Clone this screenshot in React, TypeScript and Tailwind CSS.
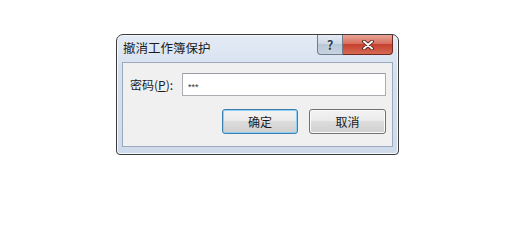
import React from "react";

const font = { fontFamily: '"Noto Sans CJK SC", "Noto Sans", sans-serif' };

const CaptionButtons = () => (
    <div className="flex h-[20px] mr-[5px]">
        <div className="w-[26px] h-full flex items-center justify-center rounded-bl-[4px] border border-t-0 border-[#6f7c8c] bg-[linear-gradient(#e4ebf3,#cdd8e5_45%,#b9c6d6_50%,#c9d4e1)]">
            <span className="text-[13px] font-bold leading-none text-[#2d3f57] [text-shadow:0_0_2px_#fff]">?</span>
        </div>
        <div className="w-[50px] h-full flex items-center justify-center rounded-br-[4px] border border-l-0 border-t-0 border-[#6e2a22] bg-[linear-gradient(#e9a597,#d8705f_45%,#c7402f_50%,#d46a52)]">
            <svg width="12" height="10" viewBox="0 0 12 10">
                <path d="M2 1.5 L10 8.5 M10 1.5 L2 8.5" stroke="#3b1612" strokeWidth="3.6" strokeLinecap="round" />
                <path d="M2 1.5 L10 8.5 M10 1.5 L2 8.5" stroke="#ffffff" strokeWidth="2" strokeLinecap="round" />
            </svg>
        </div>
    </div>
);

const DialogButton = ({ label, focused }: { label: string; focused?: boolean }) => (
    <div
        className={
            focused
                ? "w-[76px] h-[25px] flex items-center justify-center rounded-[3px] border border-[#3c7fb1] shadow-[inset_0_0_0_1px_#8fd0f2] bg-[linear-gradient(#f3f3f3,#ebebeb_45%,#dddddd_50%,#cfcfcf)]"
                : "w-[77px] h-[25px] flex items-center justify-center rounded-[3px] border border-[#707070] shadow-[inset_0_0_0_1px_#fbfbfb] bg-[linear-gradient(#f2f2f2,#ebebeb_45%,#dddddd_50%,#cfcfcf)]"
        }
    >
        <span className="text-[12px] leading-none text-[#1a1a1a]">{label}</span>
    </div>
);

export default function App() {
    return (
        <div className="w-[526px] h-[200px] bg-white pt-[34px] pl-[116px]" style={font}>
            <div className="w-[283px] h-[121px] flex flex-col rounded-t-[7px] rounded-b-[4px] border border-[#3c3c3c] bg-[linear-gradient(#e3ebf5,#d6e1ee_30%,#cfdbea)] shadow-[inset_0_0_0_1px_#f4f8fc]">
                <div className="h-[27px] flex justify-between">
                    <span className="pl-[6px] pt-[5px] text-[12.5px] leading-[16px] text-[#1b1b1b]">撤消工作簿保护</span>
                    <CaptionButtons />
                </div>
                <div className="mx-[5px] h-[85px] flex flex-col border border-[#9aa9bd] bg-[#f0f0f0] px-[6px] pt-[10px]">
                    <div className="flex items-center h-[23px]">
                        <span className="w-[53px] pl-[1px] text-[12px] leading-none text-[#1b1b1b]">
                            密码(<span className="underline">P</span>):
                        </span>
                        <div className="flex-1 h-[23px] border border-[#abadb3] border-t-[#9a9ca3] bg-white pl-[5px] pt-[1px] leading-none">
                            <span className="text-[9px] leading-none text-[#333] font-[Liberation_Sans]">***</span>
                        </div>
                    </div>
                    <div className="flex justify-end gap-[11px] mt-[13px]">
                        <DialogButton label="确定" focused />
                        <DialogButton label="取消" />
                    </div>
                </div>
            </div>
        </div>
    );
}
